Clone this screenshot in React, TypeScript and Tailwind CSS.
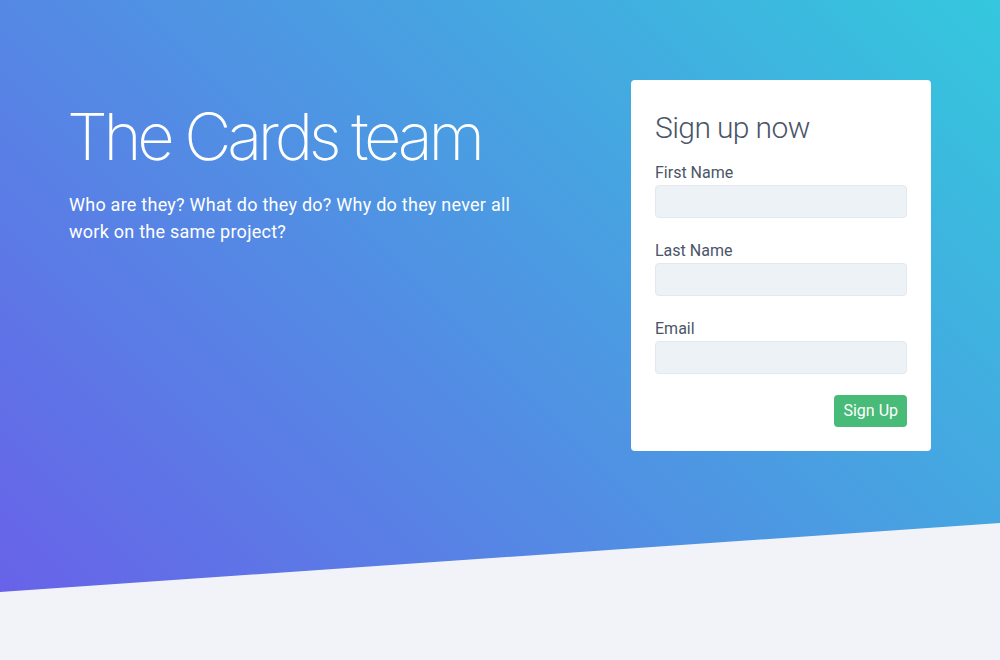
import React from "react";

function Field({ label, last }: { label: string; last?: boolean }) {
  return (
    <div className={last ? "" : "mb-[21px]"}>
      <label className="block text-base leading-6 text-[#4a5568]">{label}</label>
      <input
        type="text"
        className="block w-full h-[33px] rounded bg-[#edf2f7] border border-[#e2e8f0] outline-none"
      />
    </div>
  );
}

export default function App() {
  return (
    <div
      className="relative w-full h-[660px] bg-[#f2f3f8] overflow-hidden"
      style={{ fontFamily: "Roboto, 'Noto Sans', sans-serif" }}
    >
      <div className="absolute inset-0 bg-[linear-gradient(45deg,#6a5ee9,#34c8dd)] [clip-path:polygon(0_0,100%_0,100%_523px,0_592px)]" />
      <div className="relative flex justify-between items-start px-[69px] pt-[80px]">
        <div className="pt-[24px] w-[460px]">
          <h1 className="ml-[-2px] text-[65px] leading-none font-extralight text-white whitespace-nowrap tracking-[-4.3px] font-[Inter,sans-serif]">
            The Cards team
          </h1>
          <p className="mt-[22px] text-lg leading-[27px] text-white tracking-[0.25px]">
            Who are they? What do they do? Why do they never all work on the same project?
          </p>
        </div>
        <div className="w-[300px] bg-white rounded p-6">
          <h2 className="text-3xl leading-[48px] font-light text-[#4a5568] mb-[9px] tracking-[-0.6px]">Sign up now</h2>
          <Field label="First Name" />
          <Field label="Last Name" />
          <Field label="Email" last />
          <div className="flex justify-end mt-[21px]">
            <button className="h-8 px-[9px] rounded bg-[#48bb78] text-white text-base leading-6">Sign Up</button>
          </div>
        </div>
      </div>
    </div>
  );
}
